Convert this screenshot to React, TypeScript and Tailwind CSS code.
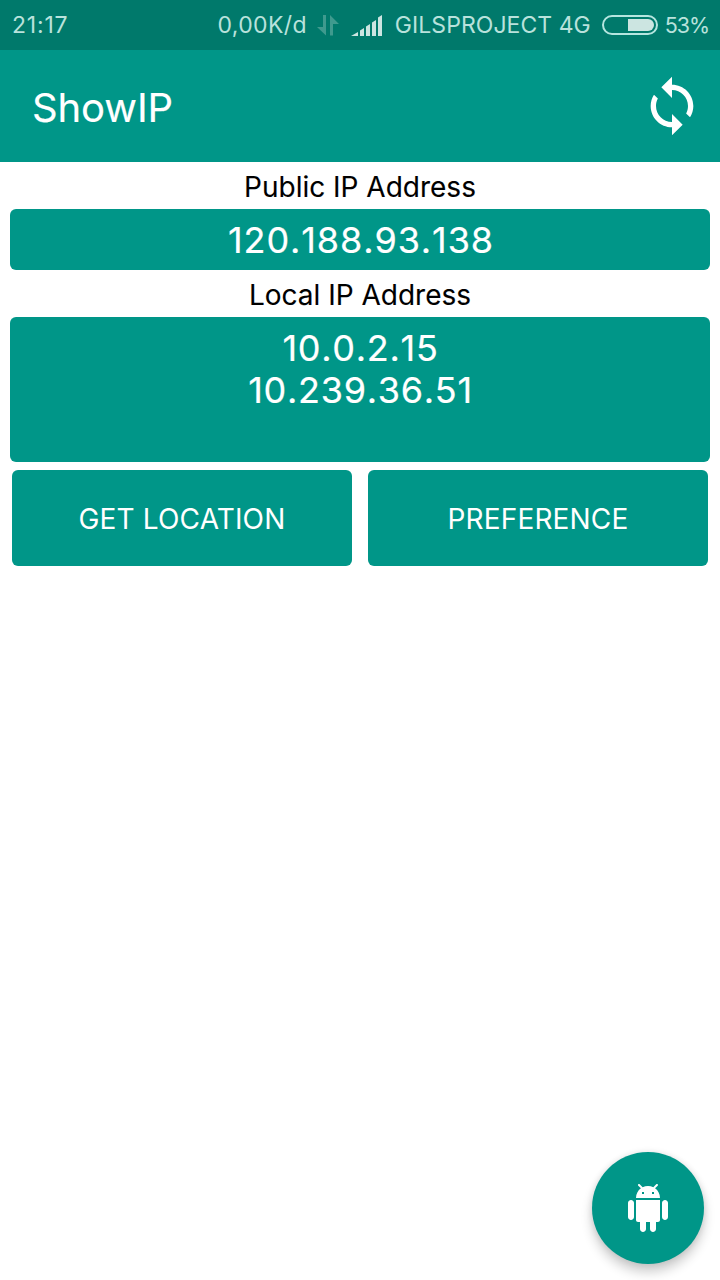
import type { ReactNode } from "react";

const SYNC_PATH =
  "M12 4V1L8 5l4 4V6c3.31 0 6 2.69 6 6 0 1.01-.25 1.97-.7 2.8l1.46 1.46C19.54 15.03 20 13.57 20 12c0-4.42-3.58-8-8-8zm0 14c-3.31 0-6-2.69-6-6 0-1.01.25-1.97.7-2.8L5.24 7.74C4.46 8.97 4 10.43 4 12c0 4.42 3.58 8 8 8v3l4-4-4-4v3z";

const ANDROID_PATH =
  "M6 18c0 .55.45 1 1 1h1v3.5c0 .83.67 1.5 1.5 1.5s1.5-.67 1.5-1.5V19h2v3.5c0 .83.67 1.5 1.5 1.5s1.5-.67 1.5-1.5V19h1c.55 0 1-.45 1-1V8H6v10zM3.5 8C2.67 8 2 8.67 2 9.5v7c0 .83.67 1.5 1.5 1.5S5 17.33 5 16.5v-7C5 8.67 4.33 8 3.5 8zm17 0c-.83 0-1.5.67-1.5 1.5v7c0 .83.67 1.5 1.5 1.5s1.5-.67 1.5-1.5v-7c0-.83-.67-1.5-1.5-1.5zm-4.97-5.84l1.3-1.3c.2-.2.2-.51 0-.71-.2-.2-.51-.2-.71 0l-1.48 1.48C13.85 1.23 12.95 1 12 1c-.96 0-1.86.23-2.66.63L7.85.15c-.2-.2-.51-.2-.71 0-.2.2-.2.51 0 .71l1.31 1.31C6.97 3.26 6 5.01 6 7h12c0-1.99-.97-3.75-2.47-4.84zM10 5H9V4h1v1zm5 0h-1V4h1v1z";

function DataArrows() {
  return (
    <svg className="ml-[10px] h-6 w-6 shrink-0" viewBox="0 0 24 24" fill="#3f9a8e">
      <path d="M6 2h3v20.500L0 14h6z" />
      <path d="M13 2l9 9h-6v11.500h-3z" />
    </svg>
  );
}

function SignalBars() {
  return (
    <svg className="ml-[10px] h-6 w-8 shrink-0" viewBox="0 0 32 24" fill="#cce5e1">
      <path d="M0 23l7-4v4zM9 17.500l4-2.500v8H9zM15 13.500l4-2.500v12h-4zM21 9.500l4-2.500v16h-4zM27 4.500L31 2v21h-4z" />
    </svg>
  );
}

function Battery() {
  return (
    <div className="ml-[11px] flex h-5 w-14 shrink-0 justify-end rounded-full border-2 border-[#b5e5df] p-[2px]">
      <div className="h-3 w-[26px] rounded-r-full bg-[#cce5e1]" />
    </div>
  );
}

function StatusBar() {
  return (
    <div className="flex h-[50px] items-center bg-[#00796b] pr-[11px] pl-3 text-[23px] whitespace-nowrap text-[#b9e2dc]">
      <span className="pt-px tracking-[0.8px] [font-kerning:none]">21:17</span>
      <span className="ml-auto pt-px tracking-[0.35px]">0,00K/d</span>
      <DataArrows />
      <SignalBars />
      <span className="ml-3 pt-px tracking-[0.05px]">GILSPROJECT 4G</span>
      <Battery />
      <span className="ml-[7px] text-[21.5px] tracking-[-1.1px]">53%</span>
    </div>
  );
}

function AppBar() {
  return (
    <header className="flex h-28 items-center justify-between bg-[#009688] pr-4 pl-8 text-white">
      <h1 className="pt-[3px] text-[40px] leading-none tracking-[-0.1px] [-webkit-text-stroke:0.15px]">ShowIP</h1>
      <button type="button" aria-label="Refresh">
        <svg className="h-16 w-16" viewBox="0 0 24 24" fill="currentColor">
          <path d={SYNC_PATH} />
        </svg>
      </button>
    </header>
  );
}

function Label({ children }: { children: ReactNode }) {
  return (
    <p className="h-[47px] pt-[6px] text-center text-[28px] leading-[38px] text-black [-webkit-text-stroke:0.1px]">
      {children}
    </p>
  );
}

function ActionButton({ children }: { children: ReactNode }) {
  return (
    <button type="button" className="h-24 flex-1 rounded-md bg-[#009688] pt-px text-[28px] tracking-[0.15px] text-white">
      {children}
    </button>
  );
}

export default function App() {
  return (
    <div className="relative h-[1280px] w-[720px] overflow-hidden bg-white font-['Inter',sans-serif]">
      <StatusBar />
      <AppBar />
      <main className="px-[10px]">
        <Label>Public IP Address</Label>
        <div className="h-[61px] rounded-md bg-[#009688] pt-[10px] pl-[2px] text-center text-[36px] leading-[42px] tracking-[0.9px] text-white [-webkit-text-stroke:0.2px] [font-kerning:none]">
          120.188.93.138
        </div>
        <Label>Local IP Address</Label>
        <div className="h-[145px] rounded-md bg-[#009688] pt-[10px] pl-px text-center text-[36px] leading-[42px] tracking-[0.7px] text-white [-webkit-text-stroke:0.2px] [font-kerning:none]">
          <p>10.0.2.15</p>
          <p>10.239.36.51</p>
        </div>
        <div className="mt-2 flex gap-4 px-[2px]">
          <ActionButton>GET LOCATION</ActionButton>
          <ActionButton>PREFERENCE</ActionButton>
        </div>
      </main>
      <button
        type="button"
        aria-label="Android"
        className="absolute right-4 bottom-4 flex h-28 w-28 items-center justify-center rounded-full bg-[#009688] text-white shadow-[0_8px_12px_rgba(0,0,0,0.2),0_0_6px_rgba(0,0,0,0.1)]"
      >
        <svg className="h-12 w-12" viewBox="0 0 24 24" fill="currentColor">
          <path d={ANDROID_PATH} />
        </svg>
      </button>
    </div>
  );
}
